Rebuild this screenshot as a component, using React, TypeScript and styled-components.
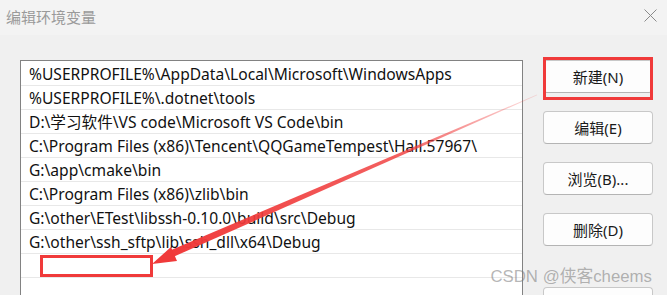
import React from "react";
import styled, {createGlobalStyle} from "styled-components";

const paths = [
  "%USERPROFILE%\\AppData\\Local\\Microsoft\\WindowsApps",
  "%USERPROFILE%\\.dotnet\\tools",
  "D:\\学习软件\\VS code\\Microsoft VS Code\\bin",
  "C:\\Program Files (x86)\\Tencent\\QQGameTempest\\Hall.57967\\",
  "G:\\app\\cmake\\bin",
  "C:\\Program Files (x86)\\zlib\\bin",
  "G:\\other\\ETest\\libssh-0.10.0\\build\\src\\Debug",
  "G:\\other\\ssh_sftp\\lib\\ssh_dll\\x64\\Debug",
  "",
  "",
];

const buttons = [
  {label: "新建(N)", highlight: true},
  {label: "编辑(E)"},
  {label: "浏览(B)..."},
  {label: "删除(D)"},
  {label: "", gapAbove: true},
];

const RED = "#f03a3a";

const App = () => {
  return (
    <>
      <GlobalStyle />
      <Window>
        <TitleBar>
          <Title>编辑环境变量</Title>
          <CloseIcon width="13" height="13" viewBox="0 0 13 13">
            <path d="M0.5 0.5 L12.5 12.5 M12.5 0.5 L0.5 12.5" stroke="#8a8a8a" strokeWidth="1" />
          </CloseIcon>
        </TitleBar>
        <Body>
          <ListBox>
            {paths.map((p, i) => (
              <Row key={i}>{p}</Row>
            ))}
          </ListBox>
          <ButtonColumn>
            {buttons.map((b, i) => (
              <Button key={i} $highlight={b.highlight} $gapAbove={b.gapAbove}>
                {b.label}
              </Button>
            ))}
          </ButtonColumn>
        </Body>

        <Annotations width="667" height="295" viewBox="0 0 667 295">
          <defs>
            <linearGradient id="fade" x1="537" y1="95" x2="160" y2="260" gradientUnits="userSpaceOnUse">
              <stop offset="0" stopColor={RED} stopOpacity="0.15" />
              <stop offset="0.35" stopColor={RED} stopOpacity="0.8" />
              <stop offset="1" stopColor={RED} stopOpacity="1" />
            </linearGradient>
          </defs>
          <polygon points="537,94.6 537.2,95.2 173,257 170,250.5" fill="url(#fade)" />
          <polygon points="152,264 177,261 171,247" fill={RED} />
          <rect x="41.5" y="256.5" width="110" height="19" fill="none" stroke={RED} strokeWidth="3" />
        </Annotations>

        <Watermark>CSDN @侠客cheems</Watermark>
      </Window>
    </>
  );
};

const GlobalStyle = createGlobalStyle`
  html, body {
    margin: 0;
    padding: 0;
    background: #f0f0f0;
  }
`;

const Window = styled.div`
  position: relative;
  width: 667px;
  height: 295px;
  overflow: hidden;
  background: #f0f0f0;
  font-family: "Noto Sans", "Noto Sans CJK SC", sans-serif;
`;

const TitleBar = styled.div`
  height: 35px;
  background: #f3f3f3;
  display: flex;
  align-items: center;
  justify-content: space-between;
  padding: 0 10px 0 6px;
  box-sizing: border-box;
`;

const Title = styled.span`
  font-family: "Noto Sans CJK SC", sans-serif;
  font-size: 15px;
  color: #9a9a9a;
  margin-top: -2px;
`;

const CloseIcon = styled.svg`
  display: block;
  margin-top: -4px;
`;

const Body = styled.div`
  display: flex;
  align-items: flex-start;
  padding: 25px 0 0 20px;
  gap: 20px;
`;

const ListBox = styled.div`
  width: 503px;
  height: 260px;
  box-sizing: border-box;
  background: #fff;
  border: 1px solid #828282;
  border-bottom: none;
  padding-top: 1px;
  display: flex;
  flex-direction: column;
`;

const Row = styled.div`
  height: 24px;
  flex-shrink: 0;
  box-sizing: border-box;
  border-bottom: 1px solid #e8e8e8;
  padding: 0 8px;
  display: flex;
  align-items: center;
  font-size: 15.6px;
  color: #111;
  white-space: nowrap;
`;

const ButtonColumn = styled.div`
  width: 110px;
  display: flex;
  flex-direction: column;
`;

const Button = styled.div<{$highlight?: boolean; $gapAbove?: boolean}>`
  position: relative;
  height: 33px;
  flex-shrink: 0;
  box-sizing: border-box;
  margin-top: ${(p) => (p.$gapAbove ? "23px" : "0")};
  margin-bottom: 18px;
  border: 1px solid #c8c8c8;
  border-bottom-color: #b4b4b4;
  border-radius: 4px;
  background: #fdfdfd;
  display: flex;
  align-items: center;
  justify-content: center;
  font-size: 15px;
  color: #1a1a1a;

  ${(p) =>
    p.$highlight &&
    `
    &::after {
      content: "";
      position: absolute;
      left: -1px;
      right: -1px;
      top: -4px;
      bottom: -8px;
      border: 3px solid ${RED};
    }
  `}
`;

const Annotations = styled.svg`
  position: absolute;
  left: 0;
  top: 0;
  pointer-events: none;
`;

const Watermark = styled.div`
  position: absolute;
  right: 15px;
  bottom: 8px;
  font-family: "Liberation Sans", "Noto Sans CJK SC", sans-serif;
  font-size: 16.8px;
  color: rgba(120, 120, 120, 0.55);
  pointer-events: none;
`;

export default App;
